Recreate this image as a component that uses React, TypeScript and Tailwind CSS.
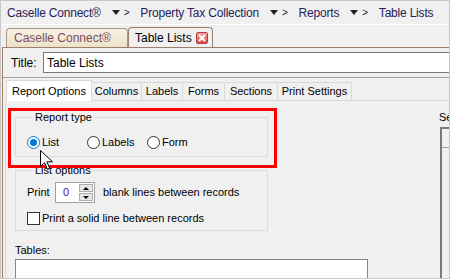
import React from 'react';

const crumbs = ['Caselle Connect®', 'Property Tax Collection', 'Reports'];
const innerTabs = [
  { name: 'Columns', w: 'w-[50px]' },
  { name: 'Labels', w: 'w-[41px]' },
  { name: 'Forms', w: 'w-[42px]' },
  { name: 'Sections', w: 'w-[53px]' },
  { name: 'Print Settings', w: 'w-[74px]' },
];

const Radio = ({ label, checked }: { label: string; checked?: boolean }) => (
  <label className="flex w-[60px] items-center gap-[2px]">
    <span
      className={
        'flex w-[13px] h-[13px] items-center justify-center rounded-full border bg-white ' +
        (checked ? 'border-[#0078d7]' : 'border-[#333333]')
      }
    >
      {checked && <span className="w-[7px] h-[7px] rounded-full bg-[#0078d7]" />}
    </span>
    <span>{label}</span>
  </label>
);

const GroupBox = ({ title, className, children }: { title: string; className?: string; children: React.ReactNode }) => (
  <fieldset className={'border border-[#dcdcdc] w-[253px] ' + (className ?? '')}>
    <legend className="ml-[6px] px-[2px] leading-[14px]">{title}</legend>
    {children}
  </fieldset>
);

export default function App() {
  return (
    <div className="relative w-[450px] h-[279px] overflow-hidden bg-[#f0f0f0] border border-[#c8c8c8] text-[11px] text-black font-['Liberation_Sans',Arial,sans-serif]">
      {/* breadcrumb */}
      <div className="flex h-[24px] items-center pl-[6px] whitespace-nowrap text-[12px] tracking-[-0.2px] text-[#241d5c] border-b border-white">
        {crumbs.map((c) => (
          <React.Fragment key={c}>
            <span>{c}</span>
            <span className="ml-[11px] mr-[11px] flex items-center gap-[4px] text-[#222]">
              <svg width="8" height="5" viewBox="0 0 8 5">
                <path d="M0 0h8L4 5z" fill="#222" />
              </svg>
              <span className="text-[10px]">&gt;</span>
            </span>
          </React.Fragment>
        ))}
        <span>Table Lists</span>
      </div>

      {/* document tabs */}
      <div className="flex h-[22px] items-end pl-[5px] text-[12px]">
        <div className="flex h-[19px] w-[122px] items-center pl-[7px] rounded-t-[4px] border border-b-0 border-[#a99484] bg-gradient-to-b from-[#f8f2e6] to-[#ede2c8] text-[#7a4d63]">
          Caselle Connect®
        </div>
        <div className="flex h-[20px] w-[85px] items-center justify-between pl-[6px] pr-[4px] rounded-t-[4px] border border-b-0 border-[#9d806b] bg-[#f0f0f0]">
          <span>Table Lists</span>
          <span className="flex w-[12px] h-[12px] items-center justify-center rounded-[2px] border border-[#b23a3a] bg-gradient-to-b from-[#f4a0a0] to-[#d84a4a]">
            <svg width="8" height="8" viewBox="0 0 8 8">
              <path d="M1 1l6 6M7 1L1 7" stroke="#fff" strokeWidth="1.8" />
            </svg>
          </span>
        </div>
      </div>

      {/* panel */}
      <div className="ml-[1px] h-full border-l border-t border-[#9d806b] flex flex-col">
        <div className="flex items-center pl-[8px] pt-[4px] pb-[4px] border-b border-[#a0a0a0] text-[12px]">
          <span className="w-[32px]">Title:</span>
          <div className="flex-1 h-[21px] flex items-center pl-[3px] bg-white border border-r-0 border-[#7a7a7a]">
            Table Lists
          </div>
        </div>

        <div className="ml-[2px] flex-1 flex flex-col">
          <div className="flex h-[23px] items-end pl-[1px] border-b border-[#d9d9d9]">
            <div className="flex h-[21px] w-[86px] -mb-px items-center justify-center bg-white border border-b-0 border-[#d9d9d9]">
              Report Options
            </div>
            {innerTabs.map((t) => (
              <div key={t.name} className={'flex h-[18px] items-center justify-center bg-[#f0f0f0] border border-l-0 border-b-0 border-[#d9d9d9] ' + t.w}>
                {t.name}
              </div>
            ))}
          </div>

          <div className="flex-1 flex border-l border-[#d9d9d9]">
            <div className="w-[433px] flex-none pl-[9px] pt-[9px] flex flex-col">
              <GroupBox title="Report type" className="h-[47px] pl-[11px] pt-[10px]">
                <div className="flex">
                  <Radio label="List" checked />
                  <Radio label="Labels" />
                  <Radio label="Form" />
                </div>
              </GroupBox>

              <GroupBox title="List options" className="mt-[6px] h-[68px] pl-[11px] pt-[5px]">
                <div className="flex items-center">
                  <span className="w-[28px]">Print</span>
                  <div className="flex w-[40px] h-[21px] items-center justify-between pl-[7px] pr-[1px] bg-white border border-[#a0a0a0]">
                    <span className="text-[#4b1a7a]">0</span>
                    <div className="flex flex-col gap-px">
                      <span className="flex w-[14px] h-[8px] items-center justify-center bg-[#e6e6e6] border border-[#adadad]">
                        <svg width="6" height="3" viewBox="0 0 6 3"><path d="M0 3h6L3 0z" fill="#000" /></svg>
                      </span>
                      <span className="flex w-[14px] h-[8px] items-center justify-center bg-[#e6e6e6] border border-[#adadad]">
                        <svg width="6" height="3" viewBox="0 0 6 3"><path d="M0 0h6L3 3z" fill="#000" /></svg>
                      </span>
                    </div>
                  </div>
                  <span className="ml-[8px]">blank lines between records</span>
                </div>
                <label className="mt-[7px] flex items-center gap-[2px]">
                  <span className="w-[13px] h-[13px] bg-white border border-[#333333]" />
                  <span>Print a solid line between records</span>
                </label>
              </GroupBox>

              <div className="mt-[12px] leading-[14px]">Tables:</div>
              <div className="mt-[2px] w-[353px] h-[40px] bg-white border border-[#828790]" />
            </div>

            <div className="flex-1 pt-[9px] flex flex-col overflow-hidden">
              <div className="leading-[14px] whitespace-nowrap">Sections</div>
              <div className="mt-[3px] ml-px flex-1 border-l-2 border-t-2 border-[#7a7a7a]">
                <div className="h-[19px] border-b border-[#a0a0a0]" />
              </div>
            </div>
          </div>
        </div>
      </div>

      {/* annotation */}
      <div className="absolute left-[7px] top-[107px] w-[269px] h-[60px] border-[3px] border-[#ff0000]" />
      <svg className="absolute left-[39px] top-[149px]" width="13" height="21" viewBox="0 0 13 21">
        <path d="M0.5 0.5v16l4-3.8 2.8 6.5 2.4-1-2.8-6.4h5.6z" fill="#fff" stroke="#000" strokeWidth="1" />
      </svg>
    </div>
  );
}
